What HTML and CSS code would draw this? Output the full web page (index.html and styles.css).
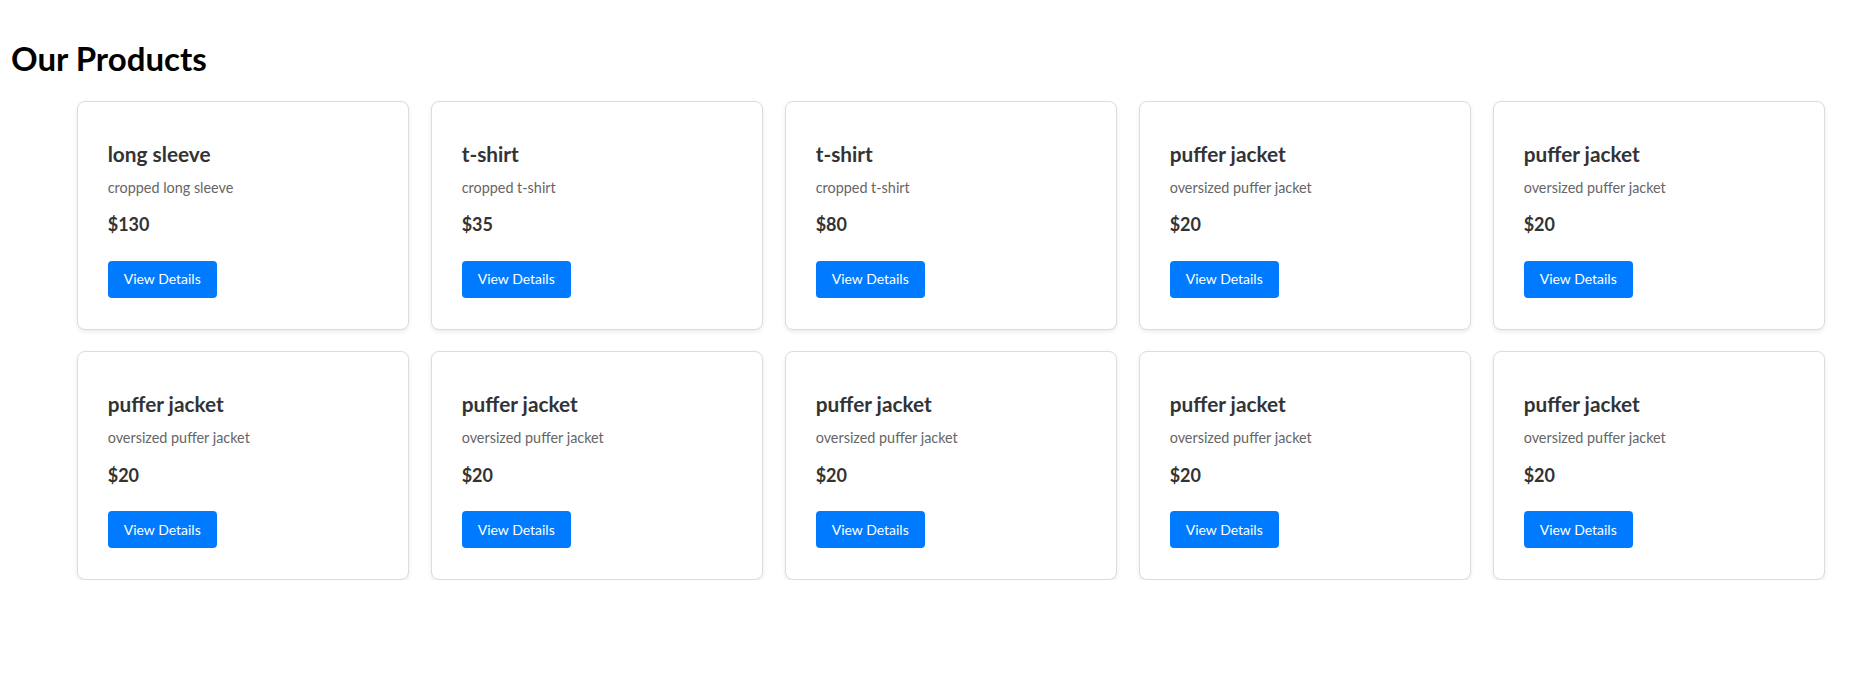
FILE: index.html
```html
<!DOCTYPE html>
<html lang="en">
<head>
<meta charset="utf-8">
<title>Our Products</title>
<link rel="stylesheet" href="styles.css">
</head>
<body>
<main class="page">
  <h1 class="page-title">Our Products</h1>
  <div class="product-grid">
    <div class="card"><h3 class="card-title">long sleeve</h3><p class="card-desc">cropped long sleeve</p><p class="card-price">$130</p><button class="btn">View Details</button></div>
    <div class="card"><h3 class="card-title">t-shirt</h3><p class="card-desc">cropped t-shirt</p><p class="card-price">$35</p><button class="btn">View Details</button></div>
    <div class="card"><h3 class="card-title">t-shirt</h3><p class="card-desc">cropped t-shirt</p><p class="card-price">$80</p><button class="btn">View Details</button></div>
    <div class="card"><h3 class="card-title">puffer jacket</h3><p class="card-desc">oversized puffer jacket</p><p class="card-price">$20</p><button class="btn">View Details</button></div>
    <div class="card"><h3 class="card-title">puffer jacket</h3><p class="card-desc">oversized puffer jacket</p><p class="card-price">$20</p><button class="btn">View Details</button></div>
    <div class="card"><h3 class="card-title">puffer jacket</h3><p class="card-desc">oversized puffer jacket</p><p class="card-price">$20</p><button class="btn">View Details</button></div>
    <div class="card"><h3 class="card-title">puffer jacket</h3><p class="card-desc">oversized puffer jacket</p><p class="card-price">$20</p><button class="btn">View Details</button></div>
    <div class="card"><h3 class="card-title">puffer jacket</h3><p class="card-desc">oversized puffer jacket</p><p class="card-price">$20</p><button class="btn">View Details</button></div>
    <div class="card"><h3 class="card-title">puffer jacket</h3><p class="card-desc">oversized puffer jacket</p><p class="card-price">$20</p><button class="btn">View Details</button></div>
    <div class="card"><h3 class="card-title">puffer jacket</h3><p class="card-desc">oversized puffer jacket</p><p class="card-price">$20</p><button class="btn">View Details</button></div>
  </div>
</main>
</body>
</html>
```
FILE: styles.css
```css
html, body {
  margin: 0;
  padding: 0;
  background: #ffffff;
}

body {
  font-family: Lato, "Open Sans", "Noto Sans", sans-serif;
}

.page {
  padding: 38px 0 0 11px;
}

.page-title {
  margin: 0 0 23px 0;
  font-size: 33px;
  line-height: 40px;
  font-weight: 700;
  color: #000;
}

.product-grid {
  margin-left: 65.7px;
  width: 1748.7px;
  display: grid;
  grid-template-columns: repeat(5, 1fr);
  column-gap: 21.3px;
  row-gap: 21.6px;
}

.card {
  border: 1px solid #dcdcdc;
  border-radius: 8px;
  box-shadow: 0 2px 4px rgba(0, 0, 0, 0.08);
  padding: 39.7px 30px 31px 30px;
  display: flex;
  flex-direction: column;
  align-items: flex-start;
  background: #fff;
}

.card-title {
  margin: 0 0 12.2px 0;
  font-size: 20.8px;
  line-height: 24px;
  font-weight: 700;
  color: #333;
}

.card-desc {
  margin: 0 0 15.6px 0;
  font-size: 14.4px;
  line-height: 20px;
  color: #666;
}

.card-price {
  margin: 0 0 25.5px 0;
  font-size: 18px;
  line-height: 22px;
  font-weight: 700;
  color: #333;
}

.btn {
  font-family: inherit;
  font-size: 14px;
  line-height: 20px;
  color: #fff;
  background: #007bff;
  border: none;
  border-radius: 4px;
  padding: 8.5px 16px 8.2px 16px;
  cursor: pointer;
}
```
